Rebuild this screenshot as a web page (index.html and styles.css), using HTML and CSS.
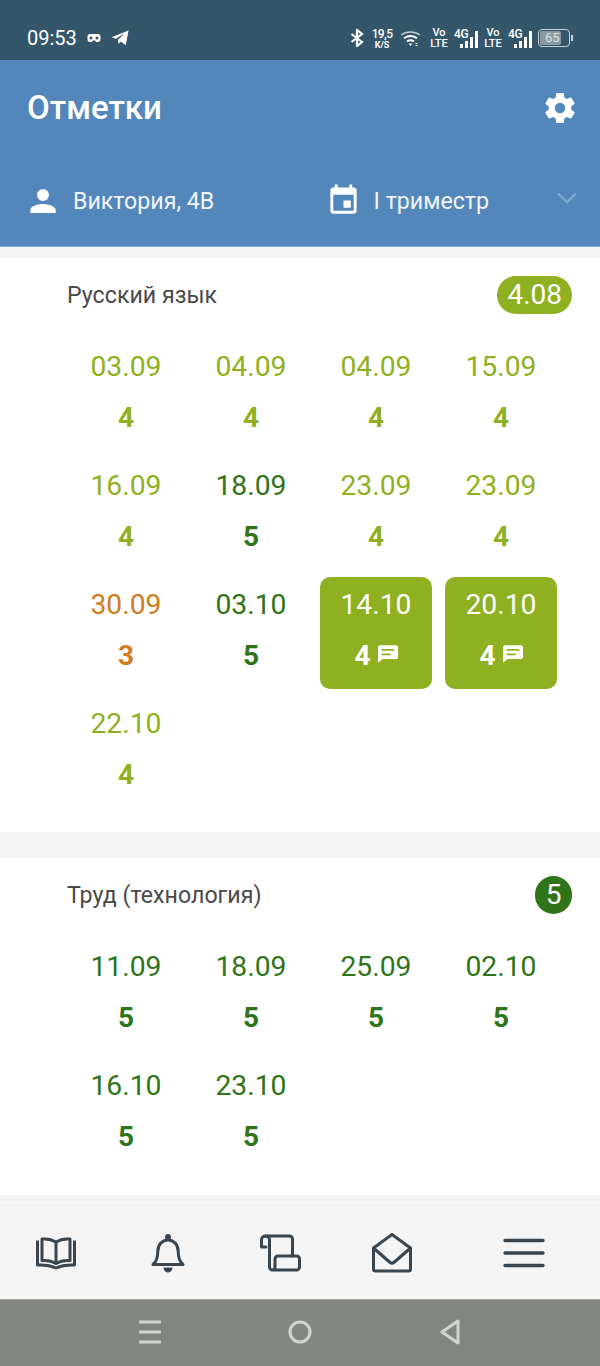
FILE: index.html
```html
<!DOCTYPE html>
<html lang="ru">
<head>
  <meta charset="UTF-8" />
  <meta name="viewport" content="width=device-width, initial-scale=1.0"/>
  <title>Отметки</title>
  <link rel="stylesheet" href="styles.css">
</head>
<body>
  <!-- Status bar -->
  <div class="status-bar">
    <div class="status-left">
      <span class="clock">09:53</span>
      <svg class="st-mask" width="14" height="10" viewBox="0 0 14 10"><path fill="#fff" fill-rule="evenodd" d="M3 1h8c1.500 0 2.500 1 2.500 2.500v3C13.500 8 12.500 9 11 9H9.500L7 7 4.500 9H3C1.500 9 .5 8 .5 6.500v-3C.5 2 1.500 1 3 1zm1 2.500a1.500 1.500 0 1 0 0 3 1.500 1.500 0 0 0 0-3zm6 0a1.500 1.500 0 1 0 0 3 1.500 1.500 0 0 0 0-3z"/></svg>
      <svg class="st-tg" width="18" height="16" viewBox="0 0 18 16"><path fill="#fff" d="M17.500.5 14.800 15.300 9.700 11.500 7.500 14 7 9.800 14 3 5 8.800.5 7.300z"/></svg>
    </div>
    <div class="status-right">
      <svg class="st-bt" width="14" height="18" viewBox="0 0 14 18"><path fill="none" stroke="#fff" stroke-width="2.200" d="M1.500 5 12 13l-5 4V1l5 4L1.500 13"/></svg>
      <div class="speed"><span>19,5</span><span class="speed-unit">K/S</span></div>
      <svg class="st-wifi" width="21" height="17" viewBox="0 0 21 16"><g fill="none" stroke="#fff"><path stroke-width="1.300" opacity=".7" d="M1 4.500C6.500.5 14.500.5 20 4.500"/><path stroke-width="1.900" d="M4 7.800c4-2.800 9-2.800 13 0"/><path stroke-width="1.900" d="M7 11c2.200-1.500 4.800-1.500 7 0"/></g><path fill="#fff" d="M8.500 13h4l-2 2.600zM15.500 12.500h2v1h-2zM15.500 14.500h2v1h-2z"/></svg>
      <div class="volte"><span>Vo</span><span>LTE</span></div>
      <div class="net">
        <span class="net-label">4G</span>
        <span class="bars"><i class="b1"></i><i class="b2"></i><i class="b3"></i><i class="b4"></i></span>
      </div>
      <div class="volte"><span>Vo</span><span>LTE</span></div>
      <div class="net">
        <span class="net-label">4G</span>
        <span class="bars"><i class="b1"></i><i class="b2"></i><i class="b3"></i><i class="b4"></i></span>
      </div>
      <div class="battery"><div class="battery-body"><span class="battery-fill">65</span></div><i class="battery-tip"></i></div>
    </div>
  </div>

  <!-- Header -->
  <header class="header">
    <div class="header-top">
      <h1 class="page-title">Отметки</h1>
      <svg width="36" height="36" viewBox="0 0 24 24"><path fill="#fff" d="M19.430 12.980c.04-.32.07-.64.07-.98s-.03-.66-.07-.98l2.110-1.650c.19-.15.24-.42.12-.64l-2-3.460c-.12-.22-.39-.3-.61-.22l-2.490 1c-.52-.4-1.080-.73-1.690-.98l-.38-2.650A.49.49 0 0 0 14 2h-4c-.25 0-.46.18-.49.420l-.38 2.650c-.61.25-1.170.59-1.690.98l-2.490-1c-.23-.09-.49 0-.61.22l-2 3.460c-.13.220-.07.490.120.640l2.110 1.650c-.04.320-.07.650-.07.980s.03.660.07.980l-2.110 1.650c-.19.150-.24.420-.12.640l2 3.460c.12.220.39.300.61.220l2.490-1c.52.400 1.080.730 1.690.980l.38 2.650c.03.240.24.420.49.420h4c.25 0 .46-.18.49-.42l.38-2.650c.61-.25 1.170-.59 1.690-.98l2.490 1c.23.090.49 0 .61-.22l2-3.460c.12-.22.07-.49-.12-.64l-2.110-1.650zM12 15.500a3.500 3.500 0 1 1 0-7 3.500 3.500 0 0 1 0 7z"/></svg>
    </div>
    <div class="header-filters">
      <div class="filter filter-student">
        <svg width="32" height="32" viewBox="0 0 24 24"><path fill="#fff" d="M12 12a4.500 4.500 0 1 0 0-9 4.500 4.500 0 0 0 0 9zm0 2.200c-3.300 0-9.500 1.500-9.500 4.500V21h19v-2.300c0-3-6.200-4.500-9.500-4.500z"/></svg>
        <span>Виктория, 4В</span>
      </div>
      <div class="filter filter-term">
        <svg width="35" height="35" viewBox="0 0 24 24"><path fill="#fff" d="M17 12h-5v5h5v-5zM16 1v2H8V1H6v2H5c-1.100 0-2 .9-2 2v14c0 1.100.9 2 2 2h14c1.100 0 2-.9 2-2V5c0-1.100-.9-2-2-2h-1V1h-2zm3 18H5V8h14v11z"/></svg>
        <span>I триместр</span>
        <svg class="chevron" width="22" height="14" viewBox="0 0 22 14"><path fill="none" stroke="#7fa9d0" stroke-width="2.400" d="M2 2.500l9 8.500 9-8.500"/></svg>
      </div>
    </div>
  </header>

  <!-- Content -->
  <main class="content">
    <section class="subject subject-ru">
      <div class="subject-head">
        <span class="subject-name">Русский язык</span>
        <span class="avg avg-four">4.08</span>
      </div>
      <div class="marks">
        <div class="mark four"><span class="mark-date">03.09</span><span class="mark-val">4</span></div>
        <div class="mark four"><span class="mark-date">04.09</span><span class="mark-val">4</span></div>
        <div class="mark four"><span class="mark-date">04.09</span><span class="mark-val">4</span></div>
        <div class="mark four"><span class="mark-date">15.09</span><span class="mark-val">4</span></div>
        <div class="mark four"><span class="mark-date">16.09</span><span class="mark-val">4</span></div>
        <div class="mark five"><span class="mark-date">18.09</span><span class="mark-val">5</span></div>
        <div class="mark four"><span class="mark-date">23.09</span><span class="mark-val">4</span></div>
        <div class="mark four"><span class="mark-date">23.09</span><span class="mark-val">4</span></div>
        <div class="mark three"><span class="mark-date">30.09</span><span class="mark-val">3</span></div>
        <div class="mark five"><span class="mark-date">03.10</span><span class="mark-val">5</span></div>
        <div class="mark four-active">
          <span class="mark-date">14.10</span>
          <span class="mark-val">4<svg class="comment" width="20" height="18" viewBox="0 0 22 19"><path fill="#fff" fill-rule="evenodd" d="M2 0h18a2 2 0 0 1 2 2v11a2 2 0 0 1-2 2H5l-5 4V2a2 2 0 0 1 2-2zM4 4v2h14V4zM4 9v2h10V9z"/></svg></span>
        </div>
        <div class="mark four-active">
          <span class="mark-date">20.10</span>
          <span class="mark-val">4<svg class="comment" width="20" height="18" viewBox="0 0 22 19"><path fill="#fff" fill-rule="evenodd" d="M2 0h18a2 2 0 0 1 2 2v11a2 2 0 0 1-2 2H5l-5 4V2a2 2 0 0 1 2-2zM4 4v2h14V4zM4 9v2h10V9z"/></svg></span>
        </div>
        <div class="mark four"><span class="mark-date">22.10</span><span class="mark-val">4</span></div>
      </div>
    </section>

    <section class="subject subject-tech">
      <div class="subject-head">
        <span class="subject-name">Труд (технология)</span>
        <span class="avg avg-five">5</span>
      </div>
      <div class="marks">
        <div class="mark five"><span class="mark-date">11.09</span><span class="mark-val">5</span></div>
        <div class="mark five"><span class="mark-date">18.09</span><span class="mark-val">5</span></div>
        <div class="mark five"><span class="mark-date">25.09</span><span class="mark-val">5</span></div>
        <div class="mark five"><span class="mark-date">02.10</span><span class="mark-val">5</span></div>
        <div class="mark five"><span class="mark-date">16.10</span><span class="mark-val">5</span></div>
        <div class="mark five"><span class="mark-date">23.10</span><span class="mark-val">5</span></div>
      </div>
    </section>
  </main>

  <!-- Bottom tabs -->
  <nav class="tabs">
    <svg class="tab" width="42" height="36" viewBox="0 0 42 36"><g fill="none" stroke="#3a444d" stroke-width="3" stroke-linejoin="round"><path d="M21 7C17 4.500 12.500 3.500 7 4v21.500c5.500-.5 10 .5 14 3 4-2.500 8.500-3.500 14-3V4C29.500 3.500 25 4.500 21 7zM21 7v21"/><path d="M2.500 5.500V30c7-.5 13 .5 18.500 3 5.500-2.500 11.500-3.500 18.500-3V5.500"/></g></svg>
    <svg class="tab" width="36" height="42" viewBox="0 0 36 42"><path fill="none" stroke="#3a444d" stroke-width="3" stroke-linejoin="round" d="M3 32.500c3.500-3 4.800-6 4.800-13 0-6.500 4-11.500 10.200-11.500s10.200 5 10.200 11.500c0 7 1.300 10 4.800 13z"/><circle cx="18" cy="5" r="3" fill="#3a444d"/><path fill="#3a444d" d="M13.500 35.500h9c0 3-2 5-4.500 5s-4.500-2-4.500-5z"/></svg>
    <svg class="tab" width="42" height="38" viewBox="0 0 42 38"><g fill="none" stroke="#3a444d" stroke-width="3" stroke-linecap="round" stroke-linejoin="round"><path d="M7 13H2.500V6C2.500 3.500 4.300 2 6.500 2h24c1.700 0 3 1.300 3 3v17"/><path d="M6.500 2C9 2 10.500 3.500 10.500 6v27c0 1.700 1.300 3 3 3h24c1.700 0 3-1.300 3-3v-8c0-1.700-1.300-3-3-3H19c-1.700 0-3 1.300-3 3v8c0 1.700-1.300 3-3 3"/></g></svg>
    <svg class="tab" width="42" height="42" viewBox="0 0 42 42"><g fill="none" stroke="#3a444d" stroke-width="3" stroke-linejoin="round"><path d="M21 2.500 2.500 16V37c0 1.200.8 2 2 2h33c1.200 0 2-.8 2-2V16z"/><path d="M2.500 16l16 14c1.500 1.300 3.500 1.300 5 0l16-14"/></g></svg>
    <svg class="tab" width="42" height="32" viewBox="0 0 42 32"><g stroke="#3a444d" stroke-width="3.400" stroke-linecap="round"><path d="M2 3.500h38M2 16h38M2 28.500h38"/></g></svg>
  </nav>

  <!-- System nav -->
  <div class="sys-nav">
    <svg width="24" height="26" viewBox="0 0 24 26"><path stroke="#d3d5d0" stroke-width="3" d="M1 3h22M1 13h22M1 23h22"/></svg>
    <svg width="24" height="24" viewBox="0 0 24 24"><circle cx="12" cy="12" r="10" fill="none" stroke="#d3d5d0" stroke-width="3"/></svg>
    <svg width="20" height="26" viewBox="0 0 20 26"><path fill="none" stroke="#d3d5d0" stroke-width="3" stroke-linejoin="round" d="M18 2 2 13l16 11z"/></svg>
  </div>
</body>
</html>
```
FILE: styles.css
```css
* {
  box-sizing: border-box;
}

body {
  font-family: 'Roboto', 'Liberation Sans', sans-serif;
  background-color: #f3f3f3;
  margin: 0;
  padding: 0;
  height: 1366px;
  display: flex;
  flex-direction: column;
  overflow: hidden;
  color: #4a4a4a;
}

/* Status bar */
.status-bar {
  height: 60px;
  flex: none;
  background-color: #34566b;
  color: white;
  display: flex;
  justify-content: space-between;
  align-items: center;
  padding: 16px 27px 0 27px;
}

.status-left,
.status-right {
  display: flex;
  align-items: center;
}

.clock {
  font-size: 20px;
  margin-right: 10px;
}

.st-mask {
  margin-right: 10px;
}

.speed,
.volte {
  display: flex;
  flex-direction: column;
  align-items: center;
  font-weight: 500;
}

.speed {
  width: 20px;
  margin: 0 8px 0 8px;
  font-size: 12px;
  line-height: 13px;
  letter-spacing: -0.6px;
}

.speed-unit {
  font-size: 9px;
  font-weight: 700;
  line-height: 8px;
  letter-spacing: 0;
}

.st-wifi {
  margin-right: 10px;
}

.volte {
  width: 16px;
  margin-right: 7px;
  font-size: 11px;
  line-height: 11px;
}

.net {
  display: flex;
  align-items: flex-end;
  width: 24px;
  height: 20px;
  margin-right: 7px;
}

.net-label {
  font-size: 12px;
  font-weight: 500;
  align-self: flex-start;
  margin-right: -8px;
  line-height: 12px;
  letter-spacing: -0.4px;
}

.bars {
  display: flex;
  align-items: flex-end;
  gap: 2px;
}

.bars i {
  display: block;
  width: 3px;
  background-color: white;
}

.b1 { height: 4px; }
.b2 { height: 7px; }
.b3 { height: 11px; }
.b4 { height: 17px; }

.net + .battery {
  margin-left: -1px;
}

.battery {
  display: flex;
  align-items: center;
  gap: 1px;
}

.battery-body {
  width: 32px;
  height: 18px;
  border: 1px solid #c9d2d8;
  border-radius: 4px;
  padding: 1px;
}

.battery-fill {
  display: block;
  width: 21px;
  height: 14px;
  background-color: #8a9ba6;
  border-radius: 2px;
  color: #dde3e7;
  font-size: 13px;
  line-height: 14px;
  text-indent: 5px;
  white-space: nowrap;
}

.battery-tip {
  display: block;
  width: 2px;
  height: 6px;
  background-color: #c9d2d8;
}

/* Header */
.header {
  height: 187px;
  flex: none;
  background-color: #5387bb;
  border-bottom: 1px solid #7fb0d6;
  color: white;
  padding: 0 22px 0 27px;
}

.header-top {
  height: 95px;
  display: flex;
  justify-content: space-between;
  align-items: center;
}

.page-title {
  font-size: 33px;
  font-weight: 500;
  margin: 0;
}

.header-filters {
  display: flex;
  align-items: center;
  margin-top: 28px;
  font-size: 23.2px;
  color: #f0f5fa;
}

.filter {
  display: flex;
  align-items: center;
}

.filter-student {
  width: 298.600px;
  gap: 14px;
}

.filter-term {
  flex: 1;
  gap: 13px;
}

.chevron {
  margin-left: auto;
  margin-bottom: 5px;
}

/* Content */
.content {
  flex: 1;
  min-height: 0;
  padding-top: 11px;
}

.subject {
  background: white;
  padding: 0 28px 0 67px;
}

.subject-ru {
  height: 574px;
  margin-bottom: 26px;
}

.subject-tech {
  height: 337px;
}

.subject-head {
  height: 74px;
  display: flex;
  justify-content: space-between;
  align-items: center;
  margin-bottom: 7px;
}

.subject-name {
  font-size: 23.2px;
}

.avg {
  height: 38px;
  min-width: 38px;
  padding: 0 10px;
  border-radius: 19px;
  color: white;
  font-size: 28px;
  line-height: 38px;
  text-align: center;
}

.avg-four {
  background-color: #8fb021;
}

.avg-five {
  background-color: #2f7418;
  min-width: 37px;
  padding: 0;
}

.marks {
  display: grid;
  grid-template-columns: repeat(4, 112px);
  grid-auto-rows: 112px;
  gap: 7px 13px;
  margin-left: 3px;
}

.mark {
  display: flex;
  flex-direction: column;
  align-items: center;
  padding-top: 10px;
  border-radius: 10px;
}

.mark-date {
  font-size: 28.300px;
  line-height: 36px;
}

.mark-val {
  display: flex;
  align-items: center;
  font-size: 28px;
  font-weight: 700;
  line-height: 36px;
  margin-top: 15px;
}

.four { color: #8fb021; }
.five { color: #2f7418; }
.three { color: #d07c1b; }

.four-active {
  background-color: #8fb021;
  color: white;
}

.comment {
  margin-left: 7px;
  margin-bottom: 4px;
}

/* Tabs */
.tabs {
  height: 95px;
  flex: none;
  background-color: #f4f4f5;
  border-top: 1px solid #eeeeee;
  border-bottom: 1px solid #a3a6a1;
  display: grid;
  grid-template-columns: 112px 112px 112px 112px 1fr;
  align-items: center;
  justify-items: center;
}

/* System nav */
.sys-nav {
  height: 66px;
  flex: none;
  background-color: #828580;
  display: grid;
  grid-template-columns: repeat(3, 150px);
  justify-content: center;
  align-items: center;
  justify-items: center;
  padding-bottom: 2px;
}
```
